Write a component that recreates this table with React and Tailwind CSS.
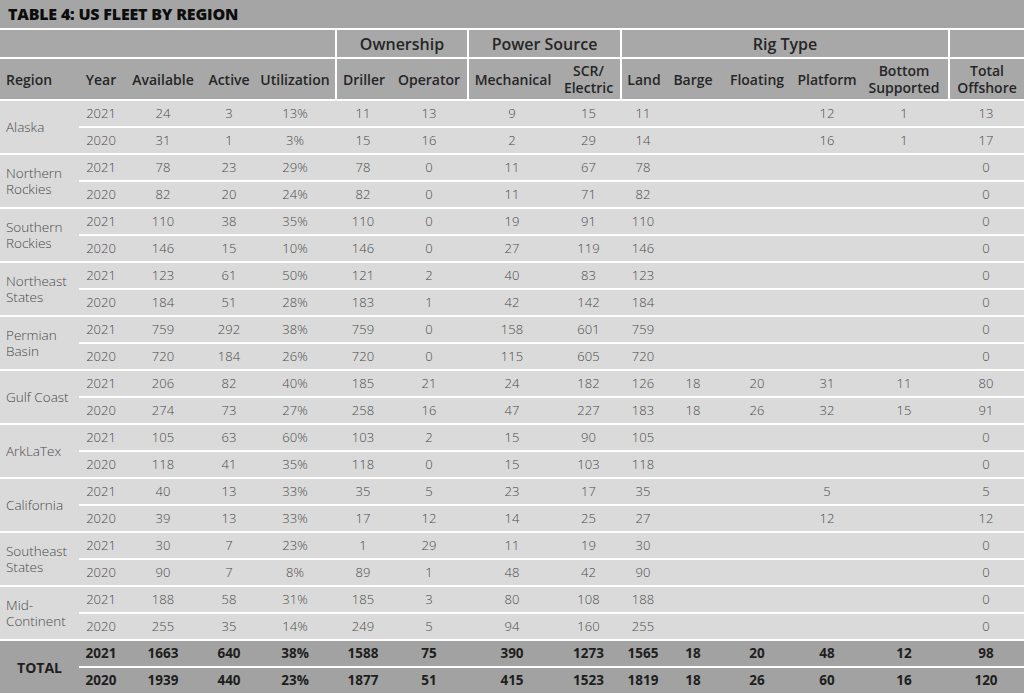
import React from 'react';

const cols = [79, 44, 80, 52, 80, 56, 76, 90, 63, 46, 54, 74, 66, 88, 76];

const regions = [
  {
    name: 'Alaska',
    rows: [
      ['2021', '24', '3', '13%', '11', '13', '9', '15', '11', '', '', '12', '1', '13'],
      ['2020', '31', '1', '3%', '15', '16', '2', '29', '14', '', '', '16', '1', '17'],
    ],
  },
  {
    name: 'Northern Rockies',
    rows: [
      ['2021', '78', '23', '29%', '78', '0', '11', '67', '78', '', '', '', '', '0'],
      ['2020', '82', '20', '24%', '82', '0', '11', '71', '82', '', '', '', '', '0'],
    ],
  },
  {
    name: 'Southern Rockies',
    rows: [
      ['2021', '110', '38', '35%', '110', '0', '19', '91', '110', '', '', '', '', '0'],
      ['2020', '146', '15', '10%', '146', '0', '27', '119', '146', '', '', '', '', '0'],
    ],
  },
  {
    name: 'Northeast States',
    rows: [
      ['2021', '123', '61', '50%', '121', '2', '40', '83', '123', '', '', '', '', '0'],
      ['2020', '184', '51', '28%', '183', '1', '42', '142', '184', '', '', '', '', '0'],
    ],
  },
  {
    name: 'Permian Basin',
    rows: [
      ['2021', '759', '292', '38%', '759', '0', '158', '601', '759', '', '', '', '', '0'],
      ['2020', '720', '184', '26%', '720', '0', '115', '605', '720', '', '', '', '', '0'],
    ],
  },
  {
    name: 'Gulf Coast',
    rows: [
      ['2021', '206', '82', '40%', '185', '21', '24', '182', '126', '18', '20', '31', '11', '80'],
      ['2020', '274', '73', '27%', '258', '16', '47', '227', '183', '18', '26', '32', '15', '91'],
    ],
  },
  {
    name: 'ArkLaTex',
    rows: [
      ['2021', '105', '63', '60%', '103', '2', '15', '90', '105', '', '', '', '', '0'],
      ['2020', '118', '41', '35%', '118', '0', '15', '103', '118', '', '', '', '', '0'],
    ],
  },
  {
    name: 'California',
    rows: [
      ['2021', '40', '13', '33%', '35', '5', '23', '17', '35', '', '', '5', '', '5'],
      ['2020', '39', '13', '33%', '17', '12', '14', '25', '27', '', '', '12', '', '12'],
    ],
  },
  {
    name: 'Southeast States',
    rows: [
      ['2021', '30', '7', '23%', '1', '29', '11', '19', '30', '', '', '', '', '0'],
      ['2020', '90', '7', '8%', '89', '1', '48', '42', '90', '', '', '', '', '0'],
    ],
  },
  {
    name: 'Mid-Continent',
    rows: [
      ['2021', '188', '58', '31%', '185', '3', '80', '108', '188', '', '', '', '', '0'],
      ['2020', '255', '35', '14%', '249', '5', '94', '160', '255', '', '', '', '', '0'],
    ],
  },
];

const totals = [
  ['2021', '1663', '640', '38%', '1588', '75', '390', '1273', '1565', '18', '20', '48', '12', '98'],
  ['2020', '1939', '440', '23%', '1877', '51', '415', '1523', '1819', '18', '26', '60', '16', '120'],
];

const headers = [
  { label: 'Year' },
  { label: 'Available' },
  { label: 'Active' },
  { label: 'Utilization' },
  { label: 'Driller', divider: true },
  { label: 'Operator' },
  { label: 'Mechanical', divider: true },
  { label: <>SCR/<br />Electric</> },
  { label: 'Land', divider: true },
  { label: 'Barge' },
  { label: 'Floating' },
  { label: 'Platform' },
  { label: 'Bottom Supported' },
  { label: 'Total Offshore', divider: true },
];

function GroupRows({ name, rows, total }) {
  const bg = total ? 'bg-[#a2a2a2]' : 'bg-[#dadada]';
  const text = total ? 'font-bold text-[#1e1e1e] text-[13.5px]' : 'font-light text-[#4a4a4a] text-[13px]';
  return rows.map((row, i) => (
    <tr key={i}>
      {i === 0 && (
        <td
          rowSpan={2}
          className={`${bg} border-t-2 border-white ${
            total
              ? 'text-center font-bold text-[#1e1e1e] text-[14px]'
              : 'pl-[6px] pr-1 text-left font-light text-[#4a4a4a] text-[13.5px] leading-[16px]'
          }`}
        >
          {name}
        </td>
      )}
      {row.map((v, j) => (
        <td key={j} className={`${bg} ${text} h-[27px] border-t-2 border-white text-center`}>
          {v}
        </td>
      ))}
    </tr>
  ));
}

export default function App() {
  return (
    <div className="w-[1024px] h-[694px] bg-white font-['Open_Sans',sans-serif] overflow-hidden">
      <table className="w-full table-fixed border-separate border-spacing-0">
        <colgroup>
          {cols.map((w, i) => (
            <col key={i} style={{ width: w }} />
          ))}
        </colgroup>
        <thead>
          <tr>
            <th
              colSpan={15}
              className="h-[28px] bg-[#a5a5a5] pl-[8px] text-left text-[16px] font-extrabold uppercase tracking-[-0.2px] text-[#0d0d0d]"
            >
              Table 4: US Fleet by Region
            </th>
          </tr>
          <tr className="text-[16px] font-semibold text-[#262626]">
            <th colSpan={5} className="h-[29px] border-t-2 border-white bg-[#a8a8a8]" />
            <th colSpan={2} className="border-t-2 border-l-2 border-white bg-[#a8a8a8] font-semibold">
              Ownership
            </th>
            <th colSpan={2} className="border-t-2 border-l-2 border-white bg-[#a8a8a8] font-semibold">
              Power Source
            </th>
            <th colSpan={5} className="border-t-2 border-l-2 border-white bg-[#a8a8a8] font-semibold">
              Rig Type
            </th>
            <th className="border-t-2 border-l-2 border-white bg-[#a8a8a8]" />
          </tr>
          <tr className="text-[14px] leading-[17px] text-[#262626]">
            <th className="h-[42px] border-t-2 border-white bg-[#a8a8a8] pl-[6px] text-left font-semibold">Region</th>
            {headers.map((h, i) => (
              <th
                key={i}
                className={`border-t-2 border-white bg-[#a8a8a8] text-center font-semibold ${h.divider ? 'border-l-2' : ''}`}
              >
                {h.label}
              </th>
            ))}
          </tr>
        </thead>
        <tbody>
          {regions.map((r) => (
            <GroupRows key={r.name} name={r.name} rows={r.rows} />
          ))}
          <GroupRows name="TOTAL" rows={totals} total />
        </tbody>
      </table>
    </div>
  );
}
